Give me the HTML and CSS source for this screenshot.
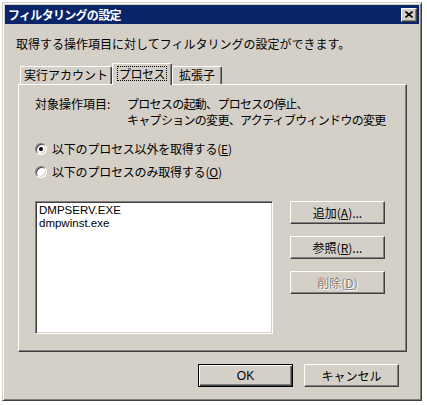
FILE: index.html
```html
<!DOCTYPE html>
<html lang="ja">
<head>
<meta charset="utf-8">
<title>フィルタリングの設定</title>
<link rel="stylesheet" href="styles.css">
</head>
<body>
<div class="window">
  <div class="titlebar">
    <span class="title">フィルタリングの設定</span>
    <span class="close"><svg width="8" height="7" viewBox="0 0 8 7"><path d="M0.5 0.5 L7.5 6.5 M7.5 0.5 L0.5 6.5" stroke="#000" stroke-width="1.6" fill="none"/></svg></span>
  </div>
  <div class="content">
    <p class="desc">取得する操作項目に対してフィルタリングの設定ができます。</p>
    <div class="tabs">
      <div class="tab t1">実行アカウント</div>
      <div class="tab t2 active"><span class="focus">プロセス</span></div>
      <div class="tab t3">拡張子</div>
    </div>
    <div class="panel">
      <div class="target">
        <span class="tlabel">対象操作項目:</span>
        <div class="tvalue">
          <div class="tline">プロセスの起動、プロセスの停止、</div>
          <div class="tline">キャプションの変更、アクティブウィンドウの変更</div>
        </div>
      </div>
      <div class="radios">
        <div class="radiorow"><span class="radio checked"></span><span class="rlabel">以下のプロセス以外を取得する(<u>E</u>)</span></div>
        <div class="radiorow"><span class="radio"></span><span class="rlabel">以下のプロセスのみ取得する(<u>O</u>)</span></div>
      </div>
      <div class="listrow">
        <div class="listbox">
          <div class="item">DMPSERV.EXE</div>
          <div class="item">dmpwinst.exe</div>
        </div>
        <div class="sidebtns">
          <div class="btn">追加(<u>A</u>)...</div>
          <div class="btn">参照(<u>R</u>)...</div>
          <div class="btn disabled">削除(<u>D</u>)</div>
        </div>
      </div>
    </div>
    <div class="footer">
      <div class="btn default">OK</div>
      <div class="btn">キャンセル</div>
    </div>
  </div>
</div>
</body>
</html>
```

FILE: styles.css
```css
html, body {
  margin: 0;
  padding: 0;
  background: #ffffff;
}
body {
  font-family: "Noto Sans CJK JP", "Liberation Sans", sans-serif;
  font-size: 12px;
  color: #000;
}
.window {
  margin: 2px 0 0 2px;
  width: 420px;
  height: 399px;
  box-sizing: border-box;
  background: #d4d0c8;
  border: 1px solid;
  border-color: #d4d0c8 #404040 #404040 #d4d0c8;
  box-shadow: inset 1px 1px #ffffff, inset -1px -1px #808080;
  padding: 2px;
}
.titlebar {
  height: 19px;
  background: #0a246a;
  display: flex;
  align-items: center;
  justify-content: space-between;
  padding: 0 2px 0 3px;
}
.title {
  color: #fff;
  font-weight: bold;
  font-size: 12px;
  letter-spacing: -0.7px;
  line-height: 19px;
}
.close {
  width: 16px;
  height: 14px;
  box-sizing: border-box;
  background: #d4d0c8;
  border: 1px solid;
  border-color: #fff #404040 #404040 #fff;
  box-shadow: inset -1px -1px #808080;
  display: flex;
  align-items: center;
  justify-content: center;
  padding-bottom: 1px;
}
.desc {
  margin: 13px 0 0 11px;
  line-height: 14px;
}
.tabs {
  display: flex;
  align-items: flex-end;
  margin: 12px 0 0 15px;
  height: 21px;
}
.tab {
  box-sizing: border-box;
  height: 18px;
  line-height: 16px;
  text-align: center;
  border-top: 1px solid #fff;
  border-left: 1px solid #fff;
  border-right: 1px solid #404040;
  box-shadow: inset -1px 0 #808080;
  border-radius: 2px 2px 0 0;
  background: #d4d0c8;
}
.t1 { width: 92px; }
.t2 { width: 60px; }
.t3 { width: 50px; }
.tab.active {
  height: 22px;
  margin-bottom: -1px;
  position: relative;
  z-index: 1;
  padding-top: 2px;
}
.focus {
  display: inline-block;
  border: 1px dotted #000;
  line-height: 13px;
  padding: 0 1px;
  letter-spacing: -0.5px;
}
.panel {
  margin-left: 13px;
  width: 389px;
  height: 268px;
  box-sizing: border-box;
  border: 1px solid;
  border-color: #fff #404040 #404040 #fff;
  box-shadow: inset -1px -1px #808080;
  padding: 11px 0 0 16px;
}
.target {
  display: flex;
  line-height: 16px;
}
.tlabel {
  width: 92px;
}
.tvalue {
  letter-spacing: -0.7px;
}
.radios {
  margin-top: 9px;
}
.radiorow {
  height: 23px;
  display: flex;
  align-items: center;
  gap: 5px;
}
.rlabel {
  letter-spacing: -0.2px;
}
.radio {
  width: 12px;
  height: 12px;
  box-sizing: border-box;
  border-radius: 50%;
  background: #fff;
  border: 1px solid;
  border-color: #808080 #fff #fff #808080;
  box-shadow: inset 1px 1px #404040, inset -1px -1px #d4d0c8;
  display: flex;
  align-items: center;
  justify-content: center;
}
.radio.checked::after {
  content: "";
  width: 4px;
  height: 4px;
  border-radius: 50%;
  background: #000;
}
.listrow {
  display: flex;
  margin-top: 18px;
  gap: 17px;
}
.listbox {
  width: 238px;
  height: 133px;
  box-sizing: border-box;
  background: #fff;
  border: 1px solid;
  border-color: #808080 #fff #fff #808080;
  box-shadow: inset 1px 1px #404040, inset -1px -1px #d4d0c8;
  padding: 2px 0 0 3px;
  font-family: "Liberation Sans", sans-serif;
  font-size: 11.5px;
  line-height: 13px;
}
.sidebtns {
  display: flex;
  flex-direction: column;
  gap: 12px;
}
.btn {
  width: 95px;
  height: 23px;
  box-sizing: border-box;
  background: #d4d0c8;
  border: 1px solid;
  border-color: #fff #404040 #404040 #fff;
  box-shadow: inset -1px -1px #808080;
  display: flex;
  align-items: center;
  justify-content: center;
  line-height: 14px;
}
.btn.disabled {
  color: #808080;
  text-shadow: 1px 1px #fff;
}
.btn.default {
  border: 1px solid #000;
  box-shadow: inset 1px 1px #fff, inset -1px -1px #404040, inset -2px -2px #808080;
  font-family: "Liberation Sans", sans-serif;
}
.footer {
  display: flex;
  justify-content: flex-end;
  gap: 11px;
  margin: 12px 20px 0 0;
}
u {
  text-decoration: underline;
  text-underline-offset: 1px;
}
```
